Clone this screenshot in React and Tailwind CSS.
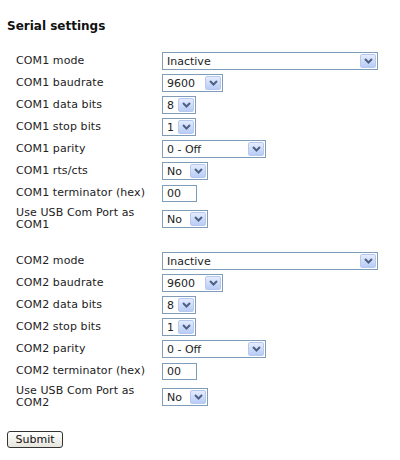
import React from "react";

function Chevron() {
  return (
    <svg width="9" height="6" viewBox="0 0 9 6" className="block">
      <polyline points="1,1 4.5,4.5 8,1" fill="none" stroke="#4d6185" strokeWidth="2" />
    </svg>
  );
}

function Select({ value, w }) {
  return (
    <div
      className={`flex h-[18px] items-stretch border border-[#7f9db9] bg-white ${w}`}
    >
      <div className="flex flex-1 items-center pl-[4px] text-[11px] leading-none text-[#222]">
        {value}
      </div>
      <div className="m-[1px] flex w-[16px] items-center justify-center rounded-[2px] border border-[#b7c8ef] bg-gradient-to-b from-[#e4ecfd] to-[#b9ccf6]">
        <Chevron />
      </div>
    </div>
  );
}

function TextInput({ value }) {
  return (
    <div className="flex h-[17px] w-[35px] items-center border border-[#7f9db9] bg-white pl-[4px] text-[11px] leading-none text-[#222]">
      {value}
    </div>
  );
}

function Row({ label, children, tall }) {
  return (
    <div className={`flex items-center ${tall ? "h-[30px]" : "h-[22px]"}`}>
      <div className="w-[154px] pl-[8px] text-[11px] leading-[12px] tracking-[0.1px] text-[#222]">
        {label}
      </div>
      <div>{children}</div>
    </div>
  );
}

function Group({ n }) {
  return (
    <div className="flex flex-col">
      <Row label={`COM${n} mode`}>
        <Select value="Inactive" w="w-[216px]" />
      </Row>
      <Row label={`COM${n} baudrate`}>
        <Select value="9600" w="w-[61px]" />
      </Row>
      <Row label={`COM${n} data bits`}>
        <Select value="8" w="w-[34px]" />
      </Row>
      <Row label={`COM${n} stop bits`}>
        <Select value="1" w="w-[34px]" />
      </Row>
      <Row label={`COM${n} parity`}>
        <Select value="0 - Off" w="w-[104px]" />
      </Row>
      {n === 1 && (
        <Row label={`COM${n} rts/cts`}>
          <Select value="No" w="w-[46px]" />
        </Row>
      )}
      <Row label={`COM${n} terminator (hex)`}>
        <TextInput value="00" />
      </Row>
      <Row
        tall
        label={
          <>
            Use USB Com Port as
            <br />
            COM{n}
          </>
        }
      >
        <Select value="No" w="w-[46px]" />
      </Row>
    </div>
  );
}

export default function App() {
  return (
    <div
      className="w-[400px] h-[460px] bg-white pl-[7px] pt-[19px]"
      style={{ fontFamily: '"DejaVu Sans", Verdana, sans-serif' }}
    >
      <h2 className="text-[12px] font-bold leading-[14px] text-[#111]">Serial settings</h2>
      <div className="ml-[1px] mt-[17px] flex flex-col">
        <Group n={1} />
        <div className="h-[16px]" />
        <Group n={2} />
      </div>
      <div className="mt-[19px]">
        <button className="flex h-[17px] w-[56px] items-center justify-center rounded-[3px] border border-[#333] bg-gradient-to-b from-[#ffffff] to-[#e6e5dc] text-[11px] leading-none text-[#111]">
          Submit
        </button>
      </div>
    </div>
  );
}
